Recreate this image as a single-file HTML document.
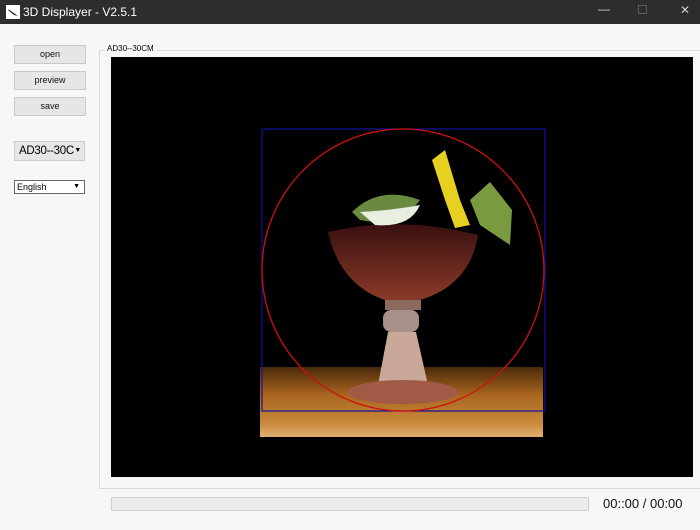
<!DOCTYPE html>
<html><head><style>
*{margin:0;padding:0;box-sizing:border-box}
body{width:700px;height:530px;background:#f7f7f7;font-family:"Liberation Sans",sans-serif;position:relative;overflow:hidden}
.t{position:absolute;left:0;top:0;width:700px;height:24px;background:#2d2d2d;color:#fff;font-size:12px}
.btn{position:absolute;left:14px;width:72px;height:19px;background:#e6e6e6;border:1px solid #c9c9c9;font-size:9px;text-align:center;line-height:17px;color:#111}
.abs{position:absolute}
</style></head><body>
<div class="t">
 <svg class="abs" style="left:6px;top:5px" width="14" height="14"><rect width="14" height="14" fill="#fff"/><path d="M2 4 L12 11 L8 10 L3 6Z" fill="#222"/></svg>
 <span class="abs" style="left:23px;top:5px">3D Displayer - V2.5.1</span>
 <span class="abs" style="left:598px;top:2px;color:#ccc">—</span>
 <span class="abs" style="left:637px;top:3px;color:#777">☐</span>
 <span class="abs" style="left:680px;top:3px;color:#ccc">✕</span>
</div>
<div class="btn" style="top:45px">open</div>
<div class="btn" style="top:71px">preview</div>
<div class="btn" style="top:97px">save</div>
<div class="abs" style="left:14px;top:141px;width:71px;height:20px;background:#e6e6e6;border:1px solid #ccc;font-size:11.5px;line-height:18px;padding-left:4px;letter-spacing:-0.3px">AD30--30C<span class="abs" style="right:3px;top:0;font-size:7px">▼</span></div>
<div class="abs" style="left:14px;top:180px;width:71px;height:14px;background:#fff;border:1px solid #666;font-size:9px;line-height:12px;padding-left:2px">English<span class="abs" style="right:4px;top:0;font-size:7px">▼</span></div>
<div class="abs" style="left:99px;top:50px;width:603px;height:439px;border:1px solid #dcdcdc;border-right:none"></div>
<div class="abs" style="left:105px;top:44px;font-size:8px;background:#f7f7f7;padding:0 2px">AD30--30CM</div>
<div class="abs" style="left:111px;top:57px;width:582px;height:420px;background:#000"></div>
<svg class="abs" style="left:0;top:0" width="700" height="530">
 <defs><linearGradient id="w" x1="0" y1="0" x2="0" y2="1"><stop offset="0" stop-color="#4a2a0c"/><stop offset=".4" stop-color="#a9651f"/><stop offset=".8" stop-color="#c98a3d"/><stop offset="1" stop-color="#e0b070"/></linearGradient>
 <linearGradient id="g" x1="0" y1="0" x2="0" y2="1"><stop offset="0" stop-color="#3a1010"/><stop offset="1" stop-color="#8a3a28"/></linearGradient></defs>
 <rect x="260" y="367" width="283" height="70" fill="url(#w)"/>
 <path d="M328 232 Q400 215 478 235 Q470 285 420 300 L385 300 Q340 285 328 232Z" fill="url(#g)"/>
 <rect x="385" y="300" width="36" height="10" fill="#8d6a60"/>
 <rect x="383" y="310" width="36" height="22" rx="8" fill="#a89088"/>
 <path d="M388 332 L416 332 L428 385 L378 385Z" fill="#c9a89a"/>
 <ellipse cx="403" cy="392" rx="55" ry="12" fill="#a05a45"/>
 <path d="M352 212 Q380 185 420 200 Q400 228 360 220Z" fill="#6a8a40"/>
 <path d="M360 212 Q395 210 420 205 Q410 228 375 225Z" fill="#e8eee0"/>
 <path d="M432 160 L445 150 L460 200 L470 225 L455 228 L445 200Z" fill="#e8d020"/>
 <path d="M470 200 L490 182 L512 210 L510 245 L480 225Z" fill="#7a9a40"/>
 <rect x="262" y="129" width="283" height="282" fill="none" stroke="#1010a0" stroke-width="1.2"/>
 <circle cx="403" cy="270" r="141" fill="none" stroke="#d01010" stroke-width="1.3"/>
</svg>
<div class="abs" style="left:111px;top:497px;width:478px;height:14px;background:#ececec;border:1px solid #d0d0d0"></div>
<div class="abs" style="left:603px;top:496px;font-size:13px;color:#111">00::00 / 00:00</div>
</body></html>
